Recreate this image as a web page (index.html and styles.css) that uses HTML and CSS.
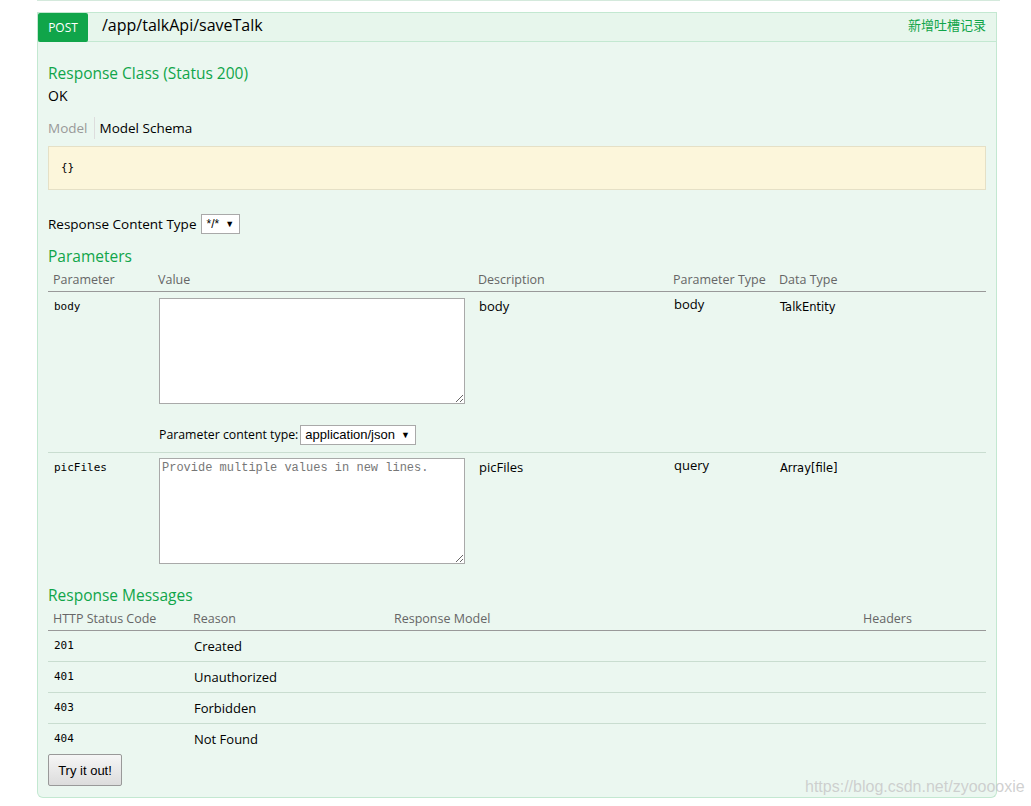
FILE: index.html
```html
<!DOCTYPE html>
<html>
<head>
<meta charset="utf-8">
<link rel="stylesheet" href="styles.css">
</head>
<body>
<div class="wrap">
  <div class="prev-edge"></div>
  <div class="op">
    <div class="heading">
      <span class="method">POST</span>
      <span class="path">/app/talkApi/saveTalk</span>
      <span class="summary">新增吐槽记录</span>
    </div>
    <div class="content">
      <h4 class="h4 first">Response Class (Status 200)</h4>
      <div class="ok">OK</div>
      <div class="tabs">
        <span class="tab inactive">Model</span>
        <span class="tab active">Model Schema</span>
      </div>
      <div class="schema"><code>{}</code></div>
      <div class="rct">
        <span>Response Content Type</span>
        <span class="sel small">*/* <span class="arr">▼</span></span>
      </div>
      <h4 class="h4">Parameters</h4>
      <table class="params">
        <thead>
          <tr>
            <th class="c1">Parameter</th>
            <th class="c2">Value</th>
            <th class="c3">Description</th>
            <th class="c4">Parameter Type</th>
            <th class="c5">Data Type</th>
          </tr>
        </thead>
        <tbody>
          <tr class="sep">
            <td class="code">body</td>
            <td class="val">
              <textarea class="ta"></textarea>
              <div class="pct">
                <span>Parameter content type:</span>
                <span class="sel">application/json <span class="arr">▼</span></span>
              </div>
            </td>
            <td class="desc">body</td>
            <td class="ptype">body</td>
            <td class="dtype">TalkEntity</td>
          </tr>
          <tr class="second">
            <td class="code">picFiles</td>
            <td class="val"><textarea class="ta" placeholder="Provide multiple values in new lines."></textarea></td>
            <td class="desc">picFiles</td>
            <td class="ptype">query</td>
            <td class="dtype">Array[file]</td>
          </tr>
        </tbody>
      </table>
      <h4 class="h4 rm">Response Messages</h4>
      <table class="resp">
        <thead>
          <tr>
            <th class="r1">HTTP Status Code</th>
            <th class="r2">Reason</th>
            <th class="r3">Response Model</th>
            <th class="r4">Headers</th>
          </tr>
        </thead>
        <tbody>
          <tr><td class="code">201</td><td>Created</td><td></td><td></td></tr>
          <tr><td class="code">401</td><td>Unauthorized</td><td></td><td></td></tr>
          <tr><td class="code">403</td><td>Forbidden</td><td></td><td></td></tr>
          <tr class="last"><td class="code">404</td><td>Not Found</td><td></td><td></td></tr>
        </tbody>
      </table>
      <button class="try">Try it out!</button>
    </div>
  </div>
  <div class="watermark">https://blog.csdn.net/zyooooxie</div>
</div>
</body>
</html>
```

FILE: styles.css
```css
html, body {
  margin: 0;
  padding: 0;
  background: #ffffff;
}
body {
  font-family: "Open Sans", "Noto Sans CJK SC", sans-serif;
  color: #000;
}
.wrap {
  position: relative;
  width: 960px;
  margin-left: 37px;
  height: 806px;
}
.prev-edge {
  height: 1px;
  background: #d4e9dc;
  margin-right: -3px;
}
.op {
  margin-top: 11px;
}
.heading {
  display: flex;
  align-items: center;
  height: 28px;
  background: #e7f6ec;
  border: 1px solid #c3e8d1;
}
.method {
  display: flex;
  align-items: center;
  justify-content: center;
  width: 50px;
  height: 29px;
  margin-top: -1px;
  margin-bottom: -1px;
  background: #10a54a;
  color: #fff;
  font-size: 12px;
  border-radius: 2px;
}
.path {
  margin-left: 14px;
  font-size: 16px;
  color: #000;
  position: relative;
  top: -2px;
}
.summary {
  margin-left: auto;
  margin-right: 10px;
  font-size: 13px;
  color: #10a54a;
  font-family: "Noto Sans CJK SC", sans-serif;
  position: relative;
  top: -3px;
}
.content {
  background: #ebf7f0;
  border: 1px solid #c3e8d1;
  border-top: none;
  border-radius: 0 0 6px 6px;
  padding: 0 10px 10px 10px;
  height: 756px;
  box-sizing: border-box;
}
.h4 {
  margin: 0;
  font-weight: normal;
  font-size: 15.5px;
  color: #10a54a;
  line-height: 20px;
}
.h4.first {
  padding-top: 21px;
}
.ok {
  font-size: 14px;
  line-height: 20px;
  margin-top: 3px;
}
.tabs {
  display: flex;
  margin-top: 11px;
  height: 22px;
  align-items: center;
}
.tab {
  font-size: 13.5px;
  line-height: 22px;
}
.tab.inactive {
  color: #999;
  padding-right: 6px;
  border-right: 1px solid #ddd;
}
.tab.active {
  padding-left: 5px;
}
.schema {
  margin-top: 7px;
  height: 44px;
  box-sizing: border-box;
  background: #fcf6db;
  border: 1px solid #e5e0c6;
  padding: 7px 12px;
}
.schema code {
  font-family: "DejaVu Sans Mono", monospace;
  font-size: 11px;
}
.rct {
  display: flex;
  align-items: center;
  margin-top: 24px;
  font-size: 13.5px;
  gap: 5px;
}
.sel {
  display: inline-flex;
  align-items: center;
  height: 20px;
  box-sizing: border-box;
  border: 1px solid #a9a9a9;
  background: #fff;
  font-family: "Liberation Sans", sans-serif;
  font-size: 13px;
  padding: 0 5px 0 4px;
}
.sel.small {
  font-size: 12px;
}
.sel .arr {
  font-size: 9px;
  margin-left: 6px;
}
.rct + .h4 {
  margin-top: 12px;
}
table {
  border-collapse: collapse;
  width: 100%;
  table-layout: fixed;
}
th {
  text-align: left;
  font-weight: normal;
  font-size: 12.5px;
  color: #666;
  padding: 5px 5px 2px 5px;
  border-bottom: 1px solid #999;
  line-height: 18px;
}
.params .c1 { width: 95px; }
.params .c2 { width: 310px; }
.params .c3 { width: 185px; }
.params .c4 { width: 96px; }
.params td {
  vertical-align: top;
  padding: 6px 5px 6px 6px;
  font-size: 13px;
  line-height: 16px;
}
.params tr.sep td {
  border-bottom: 1px solid #c9ddd0;
}
.params tr.sep td.val {
  padding-bottom: 7px;
}
.params tr.second td.val {
  padding-top: 5px;
}
.params td.code {
  font-family: "DejaVu Sans Mono", monospace;
  font-size: 11px;
  padding-top: 7px;
}
.ta {
  display: block;
  width: 306px;
  height: 106px;
  box-sizing: border-box;
  margin: 0;
  border: 1px solid #a9a9a9;
  background: #fff;
  font-family: "Liberation Mono", monospace;
  font-size: 12px;
  padding: 2px;
  resize: vertical;
}
.ta::placeholder {
  color: #777;
}
.pct {
  display: flex;
  align-items: center;
  gap: 2px;
  margin-top: 21px;
  font-size: 12.3px;
}
.params td.desc {
  padding-top: 6px;
}
.params td.ptype {
  padding-top: 4px;
}
.params td.dtype {
  font-family: "DejaVu Sans", sans-serif;
  font-size: 11.5px;
  padding-top: 7px;
}
.rm {
  margin-top: 15px;
}
.resp .r1 { width: 130px; }
.resp .r2 { width: 191px; }
.resp .r3 { width: 459px; }
.resp td {
  padding: 6px 5px 6px 6px;
  font-size: 13px;
  line-height: 18px;
  border-bottom: 1px solid #c9ddd0;
}
.resp td.code {
  font-family: "DejaVu Sans Mono", monospace;
  font-size: 11px;
}
.resp tr.last td {
  border-bottom: none;
  padding-bottom: 4px;
}
.try {
  display: block;
  margin-top: 2px;
  width: 74px;
  height: 32px;
  border: 1px solid #999;
  border-radius: 2px;
  background: linear-gradient(#f6f6f6, #dcdcdc);
  font-family: "Liberation Sans", sans-serif;
  font-size: 13px;
  color: #000;
  padding: 0;
}
.watermark {
  position: absolute;
  left: 768px;
  top: 778px;
  font-family: "Liberation Sans", sans-serif;
  font-size: 16px;
  color: rgba(200, 200, 200, 0.85);
  white-space: nowrap;
}
```
